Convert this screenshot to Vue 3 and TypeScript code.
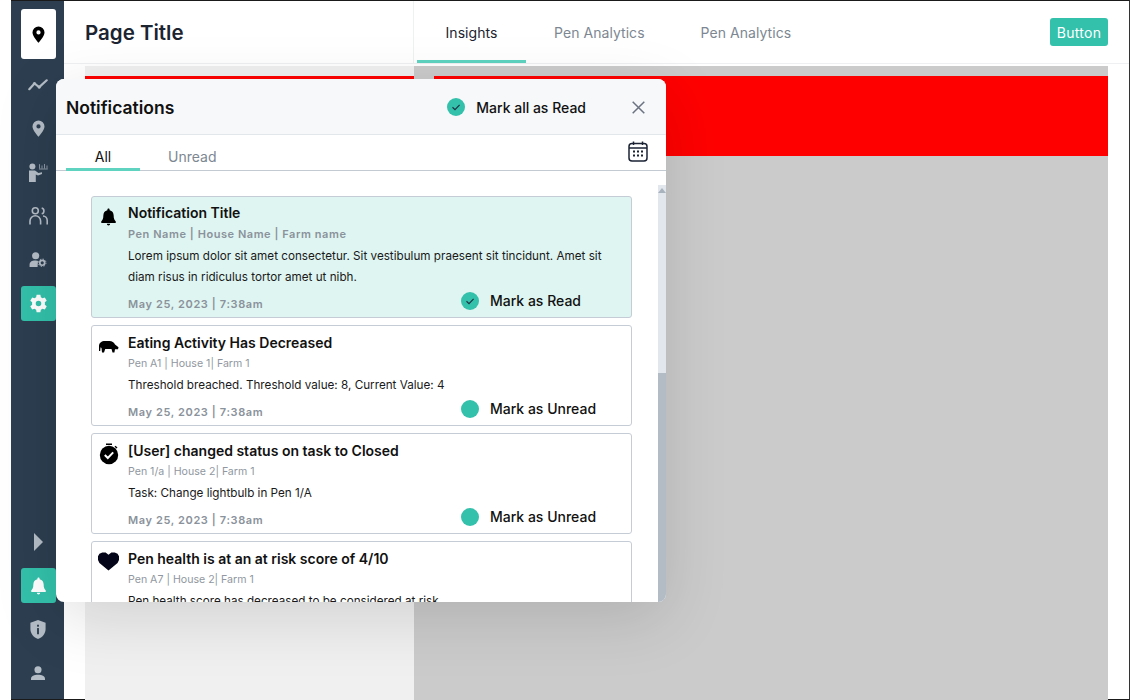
<script setup lang="ts">
interface Item {
  title: string
  meta: string
  body: string
  action: string
  icon: string
  unread?: boolean
}
const items: Item[] = [
  { title: 'Notification Title', meta: 'Pen Name | House Name | Farm name', body: 'Lorem ipsum dolor sit amet consectetur. Sit vestibulum praesent sit tincidunt. Amet sit diam risus in ridiculus tortor amet ut nibh.', action: 'Mark as Read', icon: 'bell', unread: true },
  { title: 'Eating Activity Has Decreased', meta: 'Pen A1 | House 1| Farm 1', body: 'Threshold breached. Threshold value: 8, Current Value: 4', action: 'Mark as Unread', icon: 'pig' },
  { title: '[User] changed status on task to Closed', meta: 'Pen 1/a | House 2| Farm 1', body: 'Task: Change lightbulb in Pen 1/A', action: 'Mark as Unread', icon: 'timer' },
  { title: 'Pen health is at an at risk score of 4/10', meta: 'Pen A7 | House 2| Farm 1', body: 'Pen health score has decreased to be considered at risk.', action: 'Mark as Unread', icon: 'heart' }
]
</script>

<template>
  <div class="frame">
    <div class="shell">
      <aside class="side">
        <div class="logo">
          <svg width="13" height="17" viewBox="0 0 16 20"><path fill-rule="evenodd" d="M8 0a7.400 7.400 0 0 0-7.400 7.400C.6 12 8 20 8 20s7.400-8 7.400-12.600A7.400 7.400 0 0 0 8 0Zm0 10a2.600 2.600 0 1 1 0-5.200A2.600 2.600 0 0 1 8 10Z" fill="#000"/></svg>
        </div>
        <div class="nav-btn">
          <svg width="20" height="12" viewBox="0 0 20 12"><path d="M1.300 10.200 6.500 4.500l4.700 3.600 7.500-6.800" fill="none" stroke="#b4bcc6" stroke-width="2.200" stroke-linecap="round" stroke-linejoin="round"/><circle cx="6.500" cy="4.500" r="1.600" fill="#b4bcc6"/><circle cx="11.200" cy="8.100" r="1.600" fill="#b4bcc6"/></svg>
        </div>
        <div class="nav-btn">
          <svg width="13" height="17" viewBox="0 0 16 20"><path fill-rule="evenodd" d="M8 0a7.400 7.400 0 0 0-7.400 7.400C.6 12 8 20 8 20s7.400-8 7.400-12.600A7.400 7.400 0 0 0 8 0Zm0 10a2.600 2.600 0 1 1 0-5.200A2.600 2.600 0 0 1 8 10Z" fill="#b4bcc6"/></svg>
        </div>
        <div class="nav-btn">
          <svg width="19" height="19" viewBox="0 0 19 19"><circle cx="3.400" cy="3.400" r="3" fill="#b4bcc6"/><path d="M0 7.500h6l3.500 2.400 3.500-.6v1.800l-4 1.300-2.200-1V19H0Z" fill="#b4bcc6"/><path d="M10.500 1.200v4.300M13 2.500v3M15.500 1v4.500M18 2.500v3M10 6h8.800" stroke="#b4bcc6" stroke-width=".7" fill="none"/></svg>
        </div>
        <div class="nav-btn">
          <svg width="19" height="18" viewBox="0 0 19 18" fill="none" stroke="#b4bcc6" stroke-width="1.600"><circle cx="6.300" cy="3.800" r="3"/><path d="M12.700 1a3 3 0 0 1 0 5.800"/><path d="M1 17.500V14a5.300 5.300 0 0 1 10.600 0v3.500"/><path d="M14 9a4.500 4.500 0 0 1 4.200 4.500v4"/></svg>
        </div>
        <div class="nav-btn">
          <svg width="18" height="15" viewBox="0 0 18 16"><circle cx="6.500" cy="4" r="3.800" fill="#b4bcc6"/><path d="M0 16v-2.500C0 10.500 2.500 9 6 9c1.500 0 2.400.3 3 .6L8.500 16Z" fill="#b4bcc6"/><circle cx="13.500" cy="11.500" r="2.600" fill="none" stroke="#b4bcc6" stroke-width="1.800"/><circle cx="13.500" cy="11.500" r="4" fill="none" stroke="#b4bcc6" stroke-width="1" stroke-dasharray="1.500 1.640"/></svg>
        </div>
        <div class="nav-btn active">
          <svg width="19" height="19" viewBox="0 0 24 24"><path fill="#fff" fill-rule="evenodd" d="M14.400 1h-4.800l-.6 3.100a8.400 8.400 0 0 0-2 1.200l-3-1L1.600 8.400 4 10.500a8.500 8.500 0 0 0 0 3l-2.400 2.100L4 19.700l3-1a8.400 8.400 0 0 0 2 1.200l.6 3.100h4.800l.6-3.100a8.400 8.400 0 0 0 2-1.200l3 1 2.400-4.100-2.400-2.100a8.500 8.500 0 0 0 0-3l2.400-2.100L20 4.300l-3 1a8.400 8.400 0 0 0-2-1.200ZM12 8.500a3.500 3.500 0 1 1 0 7 3.500 3.500 0 0 1 0-7Z"/></svg>
        </div>
        <div class="spacer"></div>
        <div class="nav-btn"><svg width="9" height="18" viewBox="0 0 9 18"><path d="M0 0l9 9-9 9Z" fill="#b4bcc6"/></svg></div>
        <div class="nav-btn active">
          <svg width="15" height="18" viewBox="0 0 16 18"><path fill="#fff" d="M8 0c-.7 0-1.200.5-1.200 1.200v.6C4 2.300 2.500 4.600 2.500 7.500c0 3.700-1 4.800-2 5.900-.3.300-.5.600-.5 1 0 .6.500 1 1 1h14c.5 0 1-.4 1-1 0-.4-.2-.7-.5-1-1-1.100-2-2.200-2-5.900 0-2.900-1.500-5.200-4.300-5.700v-.6C9.200.5 8.700 0 8 0ZM6.200 16.300h3.600a1.800 1.700 0 0 1-3.600 0Z"/></svg>
        </div>
        <div class="nav-btn">
          <svg width="16" height="19" viewBox="0 0 16 20"><path fill="#b4bcc6" d="M8 0 0 3v6.500C0 14.500 3.500 18.500 8 20c4.500-1.500 8-5.500 8-10.500V3Z"/><rect x="7" y="5" width="2" height="2" fill="#2c3e50"/><rect x="7" y="8.500" width="2" height="6.500" fill="#2c3e50"/></svg>
        </div>
        <div class="nav-btn">
          <svg width="14" height="14" viewBox="0 0 15 15"><circle cx="7.500" cy="4" r="3.800" fill="#b4bcc6"/><path d="M0 15v-1.500C0 10.700 3.500 9.300 7.500 9.300S15 10.700 15 13.500V15Z" fill="#b4bcc6"/></svg>
        </div>
      </aside>

      <div class="main">
        <header class="top">
          <h1 class="page-title">Page Title</h1>
          <nav class="tabs">
            <span class="tab current">Insights</span>
            <span class="tab">Pen Analytics</span>
            <span class="tab">Pen Analytics</span>
          </nav>
          <button class="btn">Button</button>
        </header>
        <div class="canvas">
          <div class="left-col"><div class="red short"></div></div>
          <div class="right-col"><div class="red tall"></div></div>
        </div>
      </div>
    </div>

    <section class="panel">
      <div class="panel-head">
        <h2 class="panel-title">Notifications</h2>
        <div class="mark-all">
          <svg class="dot" width="18" height="18" viewBox="0 0 18 18"><circle cx="9" cy="9" r="9" fill="#33c1ab"/><path d="M5.500 9.300 8 11.700l4.600-4.800" fill="none" stroke="#1d3345" stroke-width="1.200"/></svg>
          <span>Mark all as Read</span>
        </div>
        <svg class="close" width="13" height="13" viewBox="0 0 13 13"><path d="M.7.700l11.600 11.600M12.300.7.700 12.300" stroke="#6b7280" stroke-width="1.500" fill="none"/></svg>
      </div>
      <div class="panel-tabs">
        <span class="ptab on">All</span>
        <span class="ptab">Unread</span>
        <svg class="cal" width="20" height="21" viewBox="0 0 20 21" fill="none"><rect x="1" y="2.500" width="18" height="17.500" rx="3" stroke="#1a2233" stroke-width="1.500"/><path d="M1 7h18M5.500 .5v3.500M14.500 .5v3.500" stroke="#1a2233" stroke-width="1.500"/><path d="M5 10.500h2M9 10.500h2M13 10.500h2M5 14.500h2M9 14.500h2M13 14.500h2" stroke="#1a2233" stroke-width="2"/></svg>
      </div>
      <div class="panel-body">
        <div class="list">
          <article v-for="it in items" :key="it.title" class="card" :class="{ fresh: it.unread }">
            <div class="card-icon">
              <svg v-if="it.icon === 'bell'" class="i-bell" width="15" height="18" viewBox="0 0 16 18"><path d="M8 0c-.7 0-1.200.5-1.200 1.200v.6C4 2.300 2.500 4.600 2.500 7.500c0 3.700-1 4.800-2 5.900-.3.300-.5.600-.5 1 0 .6.500 1 1 1h14c.5 0 1-.4 1-1 0-.4-.2-.7-.5-1-1-1.100-2-2.200-2-5.900 0-2.900-1.500-5.200-4.300-5.700v-.6C9.200.5 8.700 0 8 0ZM6.200 16.300h3.600a1.800 1.700 0 0 1-3.600 0Z"/></svg>
              <svg v-else-if="it.icon === 'pig'" class="i-pig" width="20" height="13" viewBox="0 0 20 13"><path d="M0 6C0 3 2.500 1 6 1h4.500c2.500 0 4.500 1.500 5.500 3.500l3.500 2.800-.5 1.900h-3l-.6 3.300h-1.900l-1-3.500H6.200L5 12.500H3L2.500 8 1.600 7.200 1.200 11H0Z"/></svg>
              <svg v-else-if="it.icon === 'timer'" class="i-timer" width="20" height="22" viewBox="0 0 20 22"><path d="M7 .5h6v1.600H7ZM16.500 2.700l2 1.900-1 1-2-1.900Z"/><circle cx="10" cy="12" r="9.200"/><path d="M5.800 12l3 3 5.400-5.600" stroke="#fff" stroke-width="2" fill="none"/></svg>
              <svg v-else class="i-heart" width="21" height="19" viewBox="0 0 22 19"><path d="M11 19 1.500 11 0 8V4l1.500-2.500L4.500 0h3.500L11 2.500 14 0h3.500l3 1.500L22 4v4l-1.500 3Z" fill="#05051a"/></svg>
            </div>
            <div class="card-main">
              <h3 class="card-title">{{ it.title }}</h3>
              <p class="card-meta" :class="{ bold: it.unread }">{{ it.meta }}</p>
              <p class="card-body">{{ it.body }}</p>
              <div class="card-foot">
                <span class="time">May 25, 2023 | 7:38am</span>
                <span class="act">
                  <svg width="18" height="18" viewBox="0 0 18 18"><circle cx="9" cy="9" r="9" fill="#33c1ab"/><path v-if="it.unread" d="M5.500 9.300 8 11.700l4.600-4.800" fill="none" stroke="#1d3345" stroke-width="1.200"/></svg>
                  <span>{{ it.action }}</span>
                </span>
              </div>
            </div>
          </article>
        </div>
        <div class="scroll">
          <div class="sc-up"></div>
          <div class="sc-thumb"></div>
        </div>
      </div>
    </section>
  </div>
</template>

<style>
html, body { margin: 0; background: #fff; }
</style>

<style scoped>
.frame {
  position: relative;
  width: 1130px;
  height: 700px;
  box-sizing: border-box;
  padding-left: 11px;
  overflow: hidden;
  background: #fff;
  font-family: Inter, "Liberation Sans", sans-serif;
  color: #111;
}
.shell {
  height: 100%;
  box-sizing: border-box;
  display: flex;
  border-top: 1px solid #1a1a1a;
  border-right: 1px solid #333;
  border-bottom: 1px solid #1a1a1a;
}
.side {
  width: 53px;
  flex: none;
  background: #2c3e50;
  display: flex;
  flex-direction: column;
  align-items: flex-start;
  padding: 8px 0 8.5px 10px;
  box-sizing: border-box;
}
.logo {
  width: 35px;
  height: 50px;
  background: #fff;
  border-radius: 3px;
  display: flex;
  align-items: center;
  justify-content: center;
  flex: none;
}
.nav-btn {
  width: 35px;
  height: 35px;
  margin-top: 8.6px;
  padding-right: 1px;
  box-sizing: border-box;
  border-radius: 3px;
  display: flex;
  align-items: center;
  justify-content: center;
  flex: none;
}
.active { background: #33c1ab; }
.spacer { flex: 1; }
.main { flex: 1; display: flex; flex-direction: column; min-width: 0; }
.top {
  height: 63px;
  flex: none;
  display: flex;
  align-items: stretch;
  border-bottom: 1px solid #eef0f2;
  box-sizing: border-box;
}
.page-title {
  width: 350px;
  margin: 0;
  padding-left: 21px;
  box-sizing: border-box;
  border-right: 1px solid #eef0f2;
  font-size: 20.5px;
  font-weight: 600;
  line-height: 63px;
  color: #1b2430;
}
.tabs { display: flex; flex: 1; padding-left: 3px; }
.tab {
  font-size: 14px;
  line-height: 63px;
  color: #7d8792;
  padding: 0 28px;
  box-sizing: border-box;
  height: 62px;
  letter-spacing: 0.05px;
}
.tab.current {
  color: #1b2430;
  width: 109px;
  text-align: center;
  padding: 0;
  border-bottom: 3px solid #5fd3c0;
}
.btn {
  width: 58px;
  height: 28px;
  margin: 17px 21px 0 0;
  background: #33c1ab;
  color: #fff;
  border: none;
  border-radius: 3px;
  font: 14px Inter, "Liberation Sans", sans-serif;
  letter-spacing: 0.3px;
  padding: 0;
}
.canvas {
  flex: 1;
  display: flex;
  margin: 2px 21px -1px 21px;
  min-height: 0;
  position: relative;
}
.left-col {
  width: 329px;
  background: #f0f0f0;
  padding-top: 10px;
}
.right-col {
  flex: 1;
  background: #cbcbcb;
  padding: 10px 0 0 20px;
}
.red { background: #f00; }
.short { height: 3px; }
.tall { height: 80px; }
.panel {
  position: absolute;
  left: 56px;
  top: 79px;
  width: 610px;
  height: 523px;
  background: #fff;
  border-radius: 8px;
  overflow: hidden;
  display: flex;
  flex-direction: column;
  box-shadow: 0 16px 64px rgba(0, 0, 0, 0.13);
}
.panel-head {
  height: 56px;
  flex: none;
  display: flex;
  align-items: center;
  background: #f6f8fa;
  border-bottom: 1px solid #e2e7ec;
  box-sizing: border-box;
  padding: 1px 21px 0 10px;
}
.panel-title { margin: 0; font-size: 17.5px; font-weight: 600; color: #111; flex: 1; }
.mark-all { display: flex; align-items: center; gap: 11px; font-size: 14px; font-weight: 500; margin-right: 46px; }
.dot { flex: none; }
.panel-tabs {
  height: 36px;
  flex: none;
  display: flex;
  position: relative;
  border-bottom: 1px solid #c4cad2;
  box-sizing: border-box;
  padding-left: 10px;
}
.ptab {
  font-size: 14px;
  line-height: 44px;
  height: 35px;
  color: #7d8792;
  box-sizing: border-box;
  width: 74px;
  text-align: center;
}
.ptab + .ptab { width: 56px; margin-left: 28px; text-align: left; }
.ptab.on { color: #111; border-bottom: 3px solid #5fd3c0; height: 36px; }
.cal { position: absolute; right: 18px; top: 6px; }
.panel-body { flex: 1; display: flex; min-height: 0; overflow: hidden; }
.list {
  flex: 1;
  padding: 25px 26px 0 35px;
  display: flex;
  flex-direction: column;
  gap: 7px;
  min-width: 0;
}
.card {
  flex: none;
  display: flex;
  border: 1px solid #c6ccd5;
  border-radius: 3px;
  box-sizing: border-box;
  background: #fff;
  height: 101px;
  padding: 8px 0 0 6px;
}
.card.fresh { background: #dff5f1; height: 122px; padding-top: 7px; }
.card-icon { width: 21px; margin-right: 9px; flex: none; display: flex; justify-content: center; align-items: flex-start; }
.i-bell { margin-top: 4px; }
.i-pig { margin-top: 6px; }
.i-timer { margin-top: 1px; }
.i-heart { margin-top: 2px; }
.card-main { flex: 1; min-width: 0; padding-right: 22px; }
.card-title { margin: 0; font-size: 14px; font-weight: 600; line-height: 18px; color: #111; }
.card-meta { margin: 5px 0 0; font-size: 10.6px; line-height: 14px; color: #9097a0; }
.card-meta.bold { font-size: 11px; margin-top: 5px; font-weight: 600; letter-spacing: 0.55px; color: #8a929b; }
.card-body { margin: 4px 0 0; font-size: 11.7px; line-height: 21px; color: #1a1a1a; }
.fresh .card-body { margin-top: 5px; }
.card-foot { display: flex; justify-content: space-between; align-items: flex-start; margin-top: 4px; }
.time { font-size: 11px; line-height: 14px; padding-top: 5px; font-weight: 600; letter-spacing: 0.62px; color: #8a929b; white-space: nowrap; }
.act { display: flex; align-items: center; gap: 11px; width: 148px; flex: none; font-size: 14px; line-height: 18px; font-weight: 500; color: #111; white-space: nowrap; }
.scroll { width: 8px; flex: none; margin-top: 14px; background: #e2e7ee; position: relative; }
.sc-up { height: 0; width: 0; border: 4px solid transparent; border-top: none; border-bottom: 5px solid #a9b3be; margin: 3px auto 0; }
.sc-thumb { position: absolute; left: 0; right: 0; top: 188px; bottom: 0; background: #b3bbc5; }
</style>
